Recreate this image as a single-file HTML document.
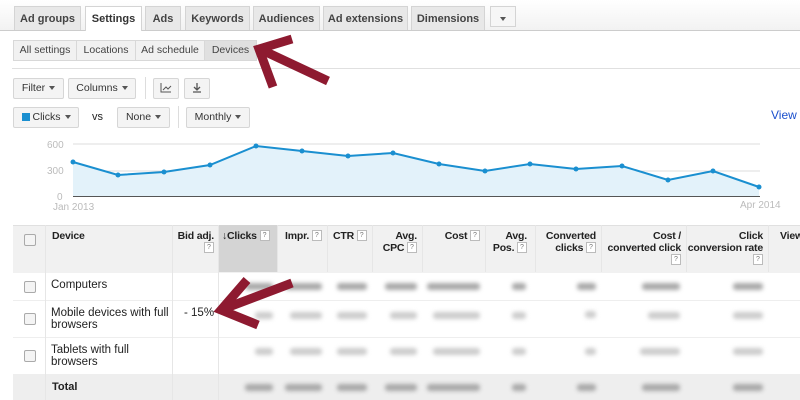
<!DOCTYPE html>
<html><head><style>
body{margin:0;width:800px;height:400px;overflow:hidden;background:#fff;font-family:"Liberation Sans",Arial,sans-serif;position:relative;font-size:11px;color:#222}
.a{position:absolute}
.tab{position:absolute;top:6px;height:24px;background:#e8e8e8;border:1px solid #d4d4d4;border-bottom:none;font-weight:bold;font-size:11px;color:#444;text-align:center;line-height:24px;box-sizing:border-box}
.sub{position:absolute;top:40px;height:21px;background:#f1f1f1;border:1px solid #d8d8d8;font-size:10.5px;color:#444;line-height:19px;text-align:center;box-sizing:border-box}
.btn{position:absolute;height:21px;background:#f4f4f4;border:1px solid #d6d6d6;border-radius:2px;font-size:10.5px;color:#333;line-height:19px;box-sizing:border-box;text-align:center}
.tri{display:inline-block;width:0;height:0;border-left:3px solid transparent;border-right:3px solid transparent;border-top:4px solid #555;vertical-align:middle;margin-left:4px}
.h{position:absolute;top:230px;font-weight:bold;font-size:10.5px;color:#222;line-height:12px;white-space:nowrap;letter-spacing:-0.2px}
.q{display:inline-block;width:8px;height:9px;border:1px solid #bbb;font-size:7px;line-height:9px;text-align:center;color:#777;font-weight:normal;background:#fff;vertical-align:top;letter-spacing:0}
.cb{position:absolute;left:24px;width:10px;height:10px;border:1px solid #aaa;border-radius:2px;background:#f4f4f4}
.bl{position:absolute;height:7px;background:#a8a8a8;filter:blur(2px);border-radius:3px}
.vl{position:absolute;top:225px;height:175px;width:1px;background:#e6e6e6}
</style></head><body>
<div class="a" style="left:0;top:0;width:800px;height:30px;background:linear-gradient(#fff,#f2f2f2);border-bottom:1px solid #ccc"></div>
<div class="tab" style="left:14px;width:67px">Ad groups</div>
<div class="tab" style="left:85px;width:57px;background:#fff;height:25px;color:#333">Settings</div>
<div class="tab" style="left:145px;width:36px">Ads</div>
<div class="tab" style="left:185px;width:65px">Keywords</div>
<div class="tab" style="left:253px;width:67px">Audiences</div>
<div class="tab" style="left:323px;width:85px">Ad extensions</div>
<div class="tab" style="left:411px;width:74px">Dimensions</div>
<div class="tab" style="left:490px;width:26px;background:#f6f6f6;border-bottom:1px solid #d4d4d4;height:21px"><span class="tri" style="margin:0"></span></div>
<div class="sub" style="left:13px;width:64px">All settings</div>
<div class="sub" style="left:76px;width:60px">Locations</div>
<div class="sub" style="left:135px;width:70px">Ad schedule</div>
<div class="sub" style="left:204px;width:53px;background:#e0e0e0">Devices</div>
<div class="a" style="left:12px;top:68px;width:788px;height:1px;background:#e0e0e0"></div>
<div class="btn" style="left:13px;top:78px;width:51px">Filter<span class="tri"></span></div>
<div class="btn" style="left:68px;top:78px;width:68px">Columns<span class="tri"></span></div>
<div class="a" style="left:145px;top:77px;width:1px;height:22px;background:#ddd"></div>
<div class="btn" style="left:153px;top:78px;width:26px">
<svg width="12" height="10" style="margin-top:4px"><path d="M1 0V9H11M3 7L6 4 8 6 11 3" stroke="#555" fill="none"/></svg></div>
<div class="btn" style="left:184px;top:78px;width:26px">
<svg width="10" height="10" style="margin-top:4px"><path d="M5 0V6M2 4L5 7 8 4M1 9H9" stroke="#555" fill="none" stroke-width="1.3"/></svg></div>
<div class="btn" style="left:13px;top:107px;width:66px"><span style="display:inline-block;width:8px;height:8px;background:#1a8fd0;vertical-align:middle;margin-right:3px"></span>Clicks<span class="tri"></span></div>
<div class="a" style="left:92px;top:111px;font-size:11px">vs</div>
<div class="btn" style="left:117px;top:107px;width:53px">None<span class="tri"></span></div>
<div class="a" style="left:178px;top:106px;width:1px;height:22px;background:#ddd"></div>
<div class="btn" style="left:186px;top:107px;width:64px">Monthly<span class="tri"></span></div>
<div class="a" style="left:771px;top:108px;color:#1a4fcc;font-size:12px">View</div>
<svg class="a" style="left:0;top:130px" width="800" height="90">
<line x1="73" y1="14" x2="760" y2="14" stroke="#ddd"/>
<line x1="73" y1="41" x2="760" y2="41" stroke="#ddd"/>
<polygon fill="#e3f2fa" points="73,32 118,45 164,42 210,35 256,16 302,21 348,26 393,23 439,34 485,41 530,34 576,39 622,36 668,50 713,41 759,57 759,66 73,66"/>
<polyline fill="none" stroke="#1a8fd0" stroke-width="2" points="73,32 118,45 164,42 210,35 256,16 302,21 348,26 393,23 439,34 485,41 530,34 576,39 622,36 668,50 713,41 759,57"/>
<g fill="#1a8fd0"><circle cx="73" cy="32" r="2.5"/><circle cx="118" cy="45" r="2.5"/><circle cx="164" cy="42" r="2.5"/><circle cx="210" cy="35" r="2.5"/><circle cx="256" cy="16" r="2.5"/><circle cx="302" cy="21" r="2.5"/><circle cx="348" cy="26" r="2.5"/><circle cx="393" cy="23" r="2.5"/><circle cx="439" cy="34" r="2.5"/><circle cx="485" cy="41" r="2.5"/><circle cx="530" cy="34" r="2.5"/><circle cx="576" cy="39" r="2.5"/><circle cx="622" cy="36" r="2.5"/><circle cx="668" cy="50" r="2.5"/><circle cx="713" cy="41" r="2.5"/><circle cx="759" cy="57" r="2.5"/></g>
<line x1="73" y1="66.5" x2="760" y2="66.5" stroke="#555"/>
<g fill="#bbb" font-size="10" font-family="Liberation Sans"><text x="47" y="18">600</text><text x="47" y="44">300</text><text x="57" y="70">0</text><text x="53" y="80">Jan 2013</text><text x="740" y="78">Apr 2014</text></g>
</svg>
<div class="a" style="left:13px;top:225px;width:787px;height:47px;background:#f1f1f1;border-top:1px solid #e0e0e0"></div>
<div class="a" style="left:218px;top:225px;width:59px;height:47px;background:#d4d4d4"></div>
<div class="a" style="left:13px;top:374px;width:787px;height:26px;background:#eee"></div>
<div class="a" style="left:13px;top:300px;width:787px;height:1px;background:#eee"></div>
<div class="a" style="left:13px;top:337px;width:787px;height:1px;background:#eee"></div>
<div class="vl" style="left:45px"></div><div class="vl" style="left:172px"></div><div class="vl" style="left:218px"></div><div class="vl" style="left:277px;height:47px"></div><div class="vl" style="left:327px;height:47px"></div><div class="vl" style="left:372px;height:47px"></div><div class="vl" style="left:422px;height:47px"></div><div class="vl" style="left:485px;height:47px"></div><div class="vl" style="left:535px;height:47px"></div><div class="vl" style="left:601px;height:47px"></div><div class="vl" style="left:686px;height:47px"></div><div class="vl" style="left:768px;height:47px"></div>
<div class="cb" style="top:234px"></div><div class="cb" style="top:281px"></div><div class="cb" style="top:313px"></div><div class="cb" style="top:350px"></div>
<div class="h" style="left:52px">Device</div>
<div class="h" style="left:170px;width:44px;text-align:right">Bid adj.<br><span class="q">?</span></div>
<div class="h" style="left:222px">↓Clicks <span class="q">?</span></div>
<div class="h" style="left:285px">Impr. <span class="q">?</span></div>
<div class="h" style="left:333px">CTR <span class="q">?</span></div>
<div class="h" style="left:372px;width:45px;text-align:right">Avg.<br>CPC <span class="q">?</span></div>
<div class="h" style="left:422px;width:58px;text-align:right">Cost <span class="q">?</span></div>
<div class="h" style="left:485px;width:42px;text-align:right">Avg.<br>Pos. <span class="q">?</span></div>
<div class="h" style="left:535px;width:61px;text-align:right">Converted<br>clicks <span class="q">?</span></div>
<div class="h" style="left:601px;width:80px;text-align:right">Cost /<br>converted click<br><span class="q">?</span></div>
<div class="h" style="left:686px;width:77px;text-align:right">Click<br>conversion rate<br><span class="q">?</span></div>
<div class="h" style="left:780px">View</div>
<div class="a" style="left:51px;top:279px;font-size:11.5px">Computers</div>
<div class="a" style="left:51px;top:307px;font-size:11.5px;line-height:12px">Mobile devices with full<br>browsers</div>
<div class="a" style="left:51px;top:344px;font-size:11.5px;line-height:12px">Tablets with full<br>browsers</div>
<div class="a" style="left:52px;top:381px;font-weight:bold;font-size:11px">Total</div>
<div class="a" style="left:184px;top:307px;font-size:11.5px">- 15%</div>
<div class="bl" style="left:245px;top:283px;width:28px"></div><div class="bl" style="left:285px;top:283px;width:37px"></div><div class="bl" style="left:337px;top:283px;width:30px"></div><div class="bl" style="left:385px;top:283px;width:32px"></div><div class="bl" style="left:427px;top:283px;width:53px"></div><div class="bl" style="left:512px;top:283px;width:14px"></div><div class="bl" style="left:577px;top:283px;width:19px"></div><div class="bl" style="left:642px;top:283px;width:38px"></div><div class="bl" style="left:733px;top:283px;width:30px"></div>
<div class="bl" style="left:255px;top:312px;width:18px;background:#ccc"></div><div class="bl" style="left:290px;top:312px;width:32px;background:#ccc"></div><div class="bl" style="left:337px;top:312px;width:30px;background:#ccc"></div><div class="bl" style="left:390px;top:312px;width:27px;background:#ccc"></div><div class="bl" style="left:433px;top:312px;width:47px;background:#ccc"></div><div class="bl" style="left:512px;top:312px;width:14px;background:#ccc"></div><div class="bl" style="left:585px;top:311px;width:11px;background:#ccc"></div><div class="bl" style="left:648px;top:312px;width:32px;background:#ccc"></div><div class="bl" style="left:733px;top:312px;width:30px;background:#ccc"></div>
<div class="bl" style="left:255px;top:348px;width:18px;background:#ccc"></div><div class="bl" style="left:290px;top:348px;width:32px;background:#ccc"></div><div class="bl" style="left:337px;top:348px;width:30px;background:#ccc"></div><div class="bl" style="left:390px;top:348px;width:27px;background:#ccc"></div><div class="bl" style="left:433px;top:348px;width:47px;background:#ccc"></div><div class="bl" style="left:512px;top:348px;width:14px;background:#ccc"></div><div class="bl" style="left:585px;top:348px;width:11px;background:#ccc"></div><div class="bl" style="left:640px;top:348px;width:40px;background:#ccc"></div><div class="bl" style="left:733px;top:348px;width:30px;background:#ccc"></div>
<div class="bl" style="left:245px;top:384px;width:28px"></div><div class="bl" style="left:285px;top:384px;width:37px"></div><div class="bl" style="left:337px;top:384px;width:30px"></div><div class="bl" style="left:385px;top:384px;width:32px"></div><div class="bl" style="left:427px;top:384px;width:53px"></div><div class="bl" style="left:512px;top:384px;width:14px"></div><div class="bl" style="left:577px;top:384px;width:19px"></div><div class="bl" style="left:642px;top:384px;width:38px"></div><div class="bl" style="left:733px;top:384px;width:30px"></div>
<svg class="a" style="left:0;top:0" width="800" height="400">
<g stroke="#8e1a30" stroke-width="9" fill="none" stroke-linecap="butt" stroke-linejoin="miter">
<line x1="328" y1="81" x2="264" y2="51"/>
<polyline points="292,39 259,49 273,87"/>
<line x1="292" y1="283" x2="226" y2="308"/>
<polyline points="247,280 221,310 258,325"/>
</g>
</svg>
</body></html>
